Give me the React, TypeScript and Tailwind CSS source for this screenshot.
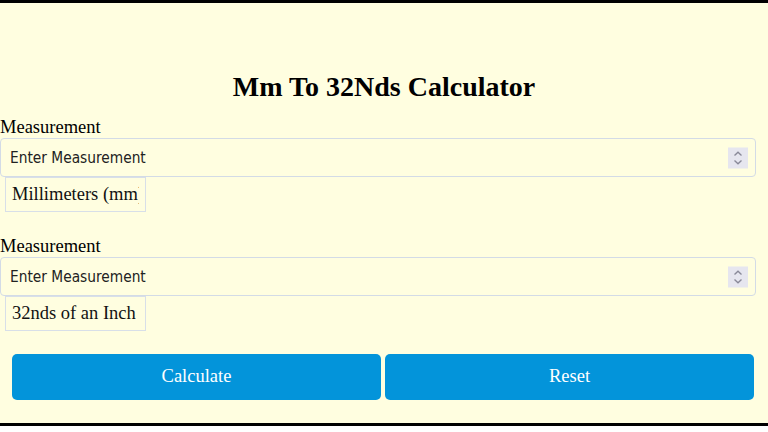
import React from 'react';

const serif = { fontFamily: '"Liberation Serif", "Times New Roman", serif' };

const Spinner: React.FC = () => (
  <div className="absolute right-[8px] top-1/2 -translate-y-1/2 w-[20px] h-[21px] bg-[#e6e6ef] flex items-center justify-center">
    <svg width="10" height="15" viewBox="0 0 10 15" fill="none" stroke="#8a8a99" strokeWidth="1.4">
      <path d="M1.5 5 L5 1.8 L8.5 5" />
      <path d="M1.5 10 L5 13.2 L8.5 10" />
    </svg>
  </div>
);

const Field: React.FC<{ unit: string }> = ({ unit }) => (
  <div>
    <label className="block text-[18.5px] leading-[20px] text-black" style={serif}>
      Measurement
    </label>
    <div className="relative w-[756px] mt-[1px]">
      <input
        type="text"
        placeholder="Enter Measurement"
        className="w-full h-[39px] border border-[#d3dbe6] rounded-[4px] bg-[#fffee0] pl-[9px] text-[15.3px] text-[#222] placeholder:text-[#222] outline-none"
        style={{ fontFamily: '"DejaVu Sans Condensed", "DejaVu Sans", Tahoma, sans-serif' }}
      />
      <Spinner />
    </div>
    <div className="ml-[5px] w-[141px] h-[35px] border border-[#d8dfe8] flex items-center pl-[6px]">
      <div className="w-[127px] overflow-hidden whitespace-nowrap text-[18.5px] text-[#111]" style={serif}>
        {unit}
      </div>
    </div>
  </div>
);

const App: React.FC = () => {
  return (
    <div className="w-[768px] h-[432px] bg-white">
      <div className="h-[426px] bg-[#fffee0] border-y-[3px] border-black flex flex-col">
        <h1 className="text-center font-bold text-[28px] leading-[32px] mt-[68px] text-black" style={serif}>
          Mm To 32Nds Calculator
        </h1>
        <div className="mt-[14px] flex flex-col gap-[24px]">
          <Field unit="Millimeters (mm)" />
          <Field unit="32nds of an Inch" />
        </div>
        <div className="mt-[23px] px-[12px] flex gap-[4px] w-[766px]">
          <button
            className="flex-1 h-[46px] rounded-[5px] bg-[#0394da] text-white text-[18.5px]"
            style={serif}
          >
            Calculate
          </button>
          <button
            className="flex-1 h-[46px] rounded-[5px] bg-[#0394da] text-white text-[18.5px]"
            style={serif}
          >
            Reset
          </button>
        </div>
      </div>
    </div>
  );
};

export default App;
